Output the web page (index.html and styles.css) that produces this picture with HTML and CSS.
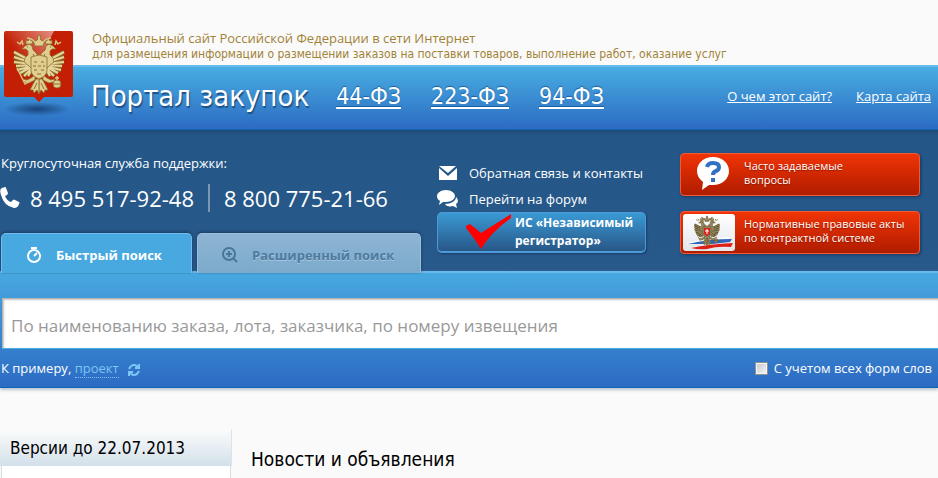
FILE: index.html
```html
<!DOCTYPE html>
<html lang="ru">
<head>
  <meta charset="UTF-8">
  <meta name="viewport" content="width=device-width, initial-scale=1.0">
  <title>Портал закупок</title>
  <link rel="stylesheet" href="styles.css">
</head>
<body>
  <svg class="sprite" width="0" height="0" aria-hidden="true">
    <defs>
      <!-- right half of the eagle, mirrored for the left one -->
      <g id="eagle-half">
        <path class="wing-back" d="M32 27L51 17M32 28L51 22M32 29L51 27M32 30L49 31M32 31L48 35M32 31L45 38M32 32L41 41M32 32L37 41"/>
        <path class="wing" d="M32 27L51 17M32 28L51 22M32 29L51 27M32 30L49 31M32 31L48 35M32 31L45 38M32 32L41 41M32 32L37 41"/>
        <path class="gold" d="M27 24l1-5 4-4 1-4 3-2 4 2 3 3-4 0-2 2 0 4 3 3 1 4-5 4-3 3-6 0z"/>
        <path class="gold" d="M33 9l-1-4 2 1 1-3 2 3 2-1 0 4z"/>
        <path class="gold" d="M30 40l4 3 4 2 4-1-1 3-5 1-6-3zM26 44l3 0 3 5 3 6-3 0-1 3-3-3-2 4z"/>
        <path class="feather" d="M28 48l3 6M37 12h1M30 23l2-4M30 36l2 3"/>
      </g>
      <g id="eagle">
        <use href="#eagle-half"/>
        <use href="#eagle-half" transform="translate(52 0) scale(-1 1)"/>
        <path class="gold" d="M18 22l8-2 8 2v13q0 6-8 9-8-3-8-9z"/>
        <path class="feather" d="M21 27h3M28 27h3M20 31h3M25 31h3M30 31h2M21 35h3M28 35h3M24 39h4"/>
        <path class="gold" d="M22 11l-2-6 3 1 2-2-1-2h1V0h2v2h1l-1 2 2 2 3-1-2 6z"/>
        <path class="ribbon" d="M30 7q4-4 8-4M22 7q-4-4-8-4M42 10l1-4 2 3 3-2M10 10L9 6 7 9 4 7"/>
        <path class="ribbon" d="M4 33l8 16 5-3"/>
        <circle class="gold" cx="44" cy="49" r="4"/>
        <path class="ribbon" d="M44 41v4M42 43h4"/>
        <path class="feather" d="M40 49h8"/>
      </g>
    </defs>
  </svg>

  <header class="top">
    <p class="top-title">Официальный сайт Российской Федерации в сети Интернет</p>
    <p class="top-text">для размещения информации о размещении заказов на поставки товаров, выполнение работ, оказание услуг</p>
    <a class="logo" href="#" aria-label="На главную">
      <svg width="76" height="86" viewBox="0 0 76 86">
        <defs>
          <radialGradient id="shadow">
            <stop offset="0" stop-color="#123a6c" stop-opacity=".85"/>
            <stop offset="1" stop-color="#123a6c" stop-opacity="0"/>
          </radialGradient>
          <linearGradient id="shine" x1="0" y1="1" x2="1" y2="0">
            <stop offset=".45" stop-color="#fff" stop-opacity="0"/>
            <stop offset="1" stop-color="#fff" stop-opacity=".5"/>
          </linearGradient>
        </defs>
        <ellipse cx="33" cy="78" rx="33" ry="7" fill="url(#shadow)"/>
        <path d="M2 0h65q2 0 2 2v62q0 2-2 2H40l-5 5-5-5H2q-2 0-2-2V2q0-2 2-2z" fill="#c31f04"/>
        <path d="M0 0h50L16 66H0z" fill="url(#shine)"/>
        <use href="#eagle" x="9" y="4"/>
      </svg>
    </a>
  </header>

  <nav class="bar">
    <h1 class="bar-name">Портал закупок</h1>
    <div class="laws">
      <a href="#">44-ФЗ</a>
      <a href="#">223-ФЗ</a>
      <a href="#">94-ФЗ</a>
    </div>
    <div class="site-links">
      <a href="#">О чем этот сайт?</a>
      <a href="#">Карта сайта</a>
    </div>
  </nav>

  <section class="info">
    <div class="support">
      <p class="support-label">Круглосуточная служба поддержки:</p>
      <p class="phones">
        <svg class="phone-icon" width="20" height="22" viewBox="0 0 20 22"><path fill="#fff" d="M2 1l3-1q1 0 1 1l2 5q0 1-1 2L5 9q2 5 6 6l2-2q1-1 2 0l4 2q1 1 0 2-1 4-5 4Q4 19 1 8-1 2 2 1z"/></svg>
        <span class="phone">8 495 517-92-48</span>
        <span class="phone">8 800 775-21-66</span>
      </p>
      <div class="tabs">
        <button class="tab tab-active" type="button">
          <svg width="16" height="16" viewBox="0 0 16 16" fill="none" stroke="#fff" stroke-width="2"><circle cx="8" cy="9" r="6"/><path d="M5 1h6M8 9l3-3"/></svg>
          Быстрый поиск
        </button>
        <button class="tab" type="button">
          <svg width="16" height="16" viewBox="0 0 16 16" fill="none" stroke="#4a7698" stroke-width="2"><circle cx="7" cy="7" r="6"/><path d="M4 7h6M7 4v6M11 11l4 4"/></svg>
          Расширенный поиск
        </button>
      </div>
    </div>

    <div class="contacts">
      <a class="contact" href="#">
        <svg width="22" height="20" viewBox="0 0 22 20"><path fill="#fff" d="M2 3h17l-8 7zM2 5l9 8 9-8v12H2z"/></svg>
        Обратная связь и контакты
      </a>
      <a class="contact" href="#">
        <svg width="22" height="20" viewBox="0 0 22 20"><path fill="#fff" d="M9 1c5 0 9 3 9 6s-4 6-9 6l-3 0-4 3 1-4C1 11 0 9 0 7c0-3 4-6 9-6z"/><path fill="#fff" d="M19 8c3 3 2 6 0 7l1 4-4-2c-4 1-7 0-8-2 6 0 11-3 11-7z"/></svg>
        Перейти на форум
      </a>
      <a class="registrar" href="#">
        <svg width="46" height="36" viewBox="0 0 46 36"><path fill="#f00" d="M0 12l4-2 11 9L45 0v4Q26 17 15 35q-6-10-15-21z"/></svg>
        <span>ИС «Независимый регистратор»</span>
      </a>
    </div>

    <div class="banners">
      <a class="banner" href="#">
        <svg width="52" height="38" viewBox="0 0 52 38">
          <path fill="#fff" d="M30 3c9 0 16 6 16 14s-7 14-16 14l-4 0-7 5 1-8c-4-3-6-7-6-11C14 9 21 3 30 3z"/>
          <path fill="none" stroke="#3171c4" stroke-width="4" d="M24 13q1-4 6-4 6 0 6 4 0 3-3 4-3 1-3 4M30 24v4"/>
        </svg>
        <span>Часто задаваемые вопросы</span>
      </a>
      <a class="banner" href="#">
        <svg class="banner-card" width="52" height="37" viewBox="0 0 52 37">
          <path fill="#fff" d="M4 29q20-5 44-6l-6 3q-20 1-38 4z"/>
          <path fill="#2f66bd" d="M5 30q20-5 44-5l-2 3-18 2z"/>
          <path fill="#de2016" d="M8 34q18-4 42-5l-2 4q-14-1-24 2-8 1-16-1z"/>
          <g class="eagle-dark" transform="translate(11 2) scale(.5)"><use href="#eagle"/></g>
          <path fill="#d6231c" d="M21 14h6v6l-3 2-3-2z"/>
          <path stroke="#fff" d="M24 15v5M22 17h4"/>
        </svg>
        <span>Нормативные правовые акты по контрактной системе</span>
      </a>
    </div>
  </section>

  <form class="search">
    <input class="search-input" type="text" aria-label="Поиск" placeholder="По наименованию заказа, лота, заказчика, по номеру извещения">
    <div class="search-bottom">
      <p class="example">
        К примеру, <a href="#">проект</a>
        <svg width="12" height="12" viewBox="0 0 12 12" fill="none" stroke="#7cc6f5" stroke-width="2"><path d="M1 5q2-4 5-4 3 0 4 3M11 0v4H7M11 7q-2 4-5 4-3 0-4-3M1 12V8h4"/></svg>
      </p>
      <label class="forms-check"><input type="checkbox"> С учетом всех форм слов</label>
    </div>
  </form>

  <main class="content">
    <aside class="versions">
      <h2>Версии до 22.07.2013</h2>
      <div class="versions-body"></div>
    </aside>
    <section class="news">
      <h2>Новости и объявления</h2>
    </section>
  </main>
</body>
</html>
```
FILE: styles.css
```css
* {
  box-sizing: border-box;
}
body {
  margin: 0;
  font-family: Tahoma, "Open Sans", sans-serif;
  font-size: 13px;
  line-height: 18px;
  background: #fafafa;
  color: #000;
}
h1, h2, p {
  margin: 0;
  font-weight: normal;
}
svg {
  flex: none;
}
.sprite {
  position: absolute;
}
.gold {
  fill: #e0cd90;
  stroke: #8c6f2b;
  stroke-width: .8;
}
.wing-back {
  fill: none;
  stroke: #8c6f2b;
  stroke-width: 4;
}
.wing {
  fill: none;
  stroke: #e6d59c;
  stroke-width: 2;
}
.feather {
  fill: none;
  stroke: #8c6c2c;
}
.ribbon {
  fill: none;
  stroke: #d9c080;
  stroke-width: 1.5;
}
.eagle-dark {
  filter: brightness(.65);
}

/* шапка */
.top {
  position: relative;
  padding: 29px 0 4px 92px;
  color: #a28237;
}
.top-title {
  line-height: 18px;
}
.top-text {
  font-family: Tahoma, "DejaVu Sans Condensed", sans-serif;
  font-size: 12px;
  line-height: 14px;
}
.logo {
  position: absolute;
  left: 4px;
  top: 31px;
}
.bar {
  display: flex;
  align-items: center;
  padding: 0 7px 4px 91px;
  height: 65px;
  background: linear-gradient(#48ade1, #2c6bc3);
  border-top: 2px solid #69b9ec;
  border-bottom: 1px solid #0e65b0;
  color: #fff;
  font-family: Tahoma, "DejaVu Sans Condensed", sans-serif;
}
.bar a {
  color: #fff;
}
.bar-name {
  font-size: 29px;
  line-height: 36px;
  text-shadow: 1px 2px 1px #1d4f83;
}
.laws {
  display: flex;
  gap: 30px;
  margin-left: 27px;
  font-size: 23px;
  line-height: 32px;
  text-shadow: 0 -1px 1px #1d5f9f;
}
.laws a {
  text-decoration-thickness: 2px;
  text-underline-offset: 3px;
}
.site-links {
  display: flex;
  gap: 24px;
  margin-left: auto;
  font-family: Tahoma, "Open Sans", sans-serif;
}

/* контакты и вкладки */
.info {
  display: flex;
  background: linear-gradient(#1e4a78, #245687 5px, #28598b);
  color: #fff;
}
.support {
  width: 437px;
  padding-top: 24px;
}
.support-label {
  padding-left: 1px;
}
.phones {
  display: flex;
  align-items: center;
  margin-top: 12px;
  font-size: 22px;
  line-height: 28px;
}
.phone-icon {
  margin-right: 10px;
}
.phone + .phone {
  margin-left: 14px;
  padding-left: 14px;
  border-left: 2px solid #7c97b0;
}
.tabs {
  position: relative;
  display: flex;
  gap: 5px;
  margin: 21px 0 -2px 1px;
}
.tab {
  display: flex;
  align-items: center;
  gap: 14px;
  width: 224px;
  height: 40px;
  padding: 2px 24px 0;
  border: 1px solid #9dc0da;
  border-bottom: 0;
  border-radius: 5px 5px 0 0;
  background: linear-gradient(#8eb5d3, #7caacb);
  box-shadow: 0 -1px 3px #17385c;
  color: #4f7a9f;
  font-family: inherit;
  font-size: 13px;
  font-weight: bold;
  white-space: nowrap;
  text-shadow: 0 1px 0 #a9c8de;
}
.tab-active {
  width: 191px;
  border-color: #72bdf0;
  background: #48a8e0;
  color: #fff;
  text-shadow: none;
}
.contacts {
  width: 209px;
  padding-top: 30px;
}
.contact {
  display: flex;
  align-items: center;
  gap: 10px;
  height: 26px;
  color: #fff;
  text-decoration: none;
  white-space: nowrap;
}
.registrar {
  display: flex;
  align-items: center;
  gap: 3px;
  height: 41px;
  padding-left: 28px;
  border: 1px solid #4b9bd8;
  border-bottom-width: 2px;
  border-radius: 5px;
  background: linear-gradient(#3a9ad4, #285787);
  box-shadow: 1px 1px 2px #1a3d66;
  color: #fff;
  font-size: 12px;
  font-weight: bold;
  text-decoration: none;
}
.banners {
  width: 240px;
  margin-left: auto;
  margin-right: 18px;
  padding-top: 23px;
}
.banner {
  display: flex;
  align-items: center;
  gap: 9px;
  height: 43px;
  margin-bottom: 15px;
  padding: 0 2px 3px;
  border: 1px solid #f05a34;
  border-radius: 4px;
  background: linear-gradient(#f03406, #b01c00);
  box-shadow: 1px 1px 3px #173a60;
  color: #fff;
  font-size: 11px;
  line-height: 14px;
  text-decoration: none;
  text-shadow: 0 1px 1px #8c1a00;
}
.banner:first-child span {
  max-width: 130px;
}
.banner-card {
  margin-top: 2px;
  border-radius: 3px;
  background: linear-gradient(#fff, #e2e6ea);
}

/* поиск */
.search {
  padding-top: 25px;
  background: linear-gradient(#48a8e0, #2c6bc3);
  border-top: 2px solid #69b9ec;
  border-bottom: 1px solid #0e65b0;
  box-shadow: 0 2px 3px #b9c2cf;
  color: #fff;
}
.search-input {
  display: block;
  width: calc(100% - 2px);
  height: 51px;
  margin-left: 2px;
  padding: 3px 8px 0;
  border: 1px solid #b4b4b4;
  border-width: 1px 0 1px 1px;
  border-bottom-color: #45aee0;
  background: #fff;
  box-shadow: inset 1px 1px 2px #c4c4c4;
  font-family: inherit;
  font-size: 17px;
}
.search-input::placeholder {
  color: #999;
}
.search-bottom {
  display: flex;
  align-items: center;
  justify-content: space-between;
  height: 38px;
  padding: 0 6px 0 1px;
}
.example a {
  color: #7cc6f5;
  text-decoration: none;
  border-bottom: 1px dotted #7cc6f5;
}
.example svg {
  margin-left: 6px;
  vertical-align: -3px;
}
.forms-check {
  display: flex;
  align-items: center;
  gap: 6px;
}
.forms-check input {
  appearance: none;
  width: 13px;
  height: 13px;
  margin: 0;
  border: 1px solid #8e8f8f;
  background: linear-gradient(135deg, #c4c8ce, #f6f6f6);
  box-shadow: inset 0 0 0 1px #f4f4f4;
}

/* содержимое */
.content {
  display: flex;
  gap: 19px;
  padding-top: 41px;
  font-family: Tahoma, "DejaVu Sans Condensed", sans-serif;
}
.content h2 {
  font-size: 19px;
  line-height: 24px;
}
.versions {
  width: 232px;
}
.content .versions h2 {
  padding: 7px 10px 6px;
  border-right: 1px solid #dde3e8;
  background: linear-gradient(#fbfcfc, #d3e0ea);
  font-size: 17px;
}
.versions-body {
  height: 12px;
  margin: 0 1px;
  border: 1px solid #d3e0ea;
  border-width: 0 1px;
  background: #fff;
}
.news {
  padding-top: 18px;
}
```
